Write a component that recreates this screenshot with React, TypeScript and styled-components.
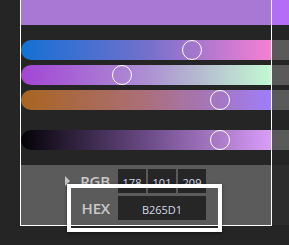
import React from "react";
import styled, { createGlobalStyle } from "styled-components";

const Global = createGlobalStyle`
  html, body { margin: 0; padding: 0; background: #252525; overflow: hidden; }
  #root { width: 289px; height: 245px; }
`;

const Page = styled.div`
  position: relative;
  display: flex;
  align-items: flex-start;
  width: 289px;
  height: 245px;
  padding-left: 20px;
  box-sizing: border-box;
  background: #252525;
  font-family: "Open Sans", "Liberation Sans", sans-serif;
`;

const Frame = styled.div`
  width: 252px;
  box-sizing: border-box;
  border-left: 1px solid #ffffff;
  border-right: 1px solid #ffffff;
  border-bottom: 1px solid #ffffff;
  display: flex;
  flex-direction: column;
`;

const Header = styled.div`
  height: 25px;
  background: #a878d4;
`;

const Track = styled.div<{ $mt: number; $grad: string }>`
  position: relative;
  height: 20px;
  margin-top: ${(p) => p.$mt}px;
  border-radius: 10px 0 0 10px;
  background: ${(p) => p.$grad};
`;

const Thumb = styled.div`
  position: absolute;
  top: 0;
  width: 20px;
  height: 20px;
  box-sizing: border-box;
  border: 1.5px solid #ffffff;
  border-radius: 50%;
`;

const Panel = styled.div`
  margin-top: 15px;
  height: 60px;
  box-sizing: border-box;
  background: #5b5b5b;
  padding: 4px 0 5px;
  display: grid;
  grid-template-columns: 89px 88px;
  grid-auto-rows: 24px;
  column-gap: 8px;
  row-gap: 3px;
`;

const Label = styled.div`
  display: flex;
  align-items: center;
  justify-content: flex-end;
  gap: 10px;
  color: #c9c9c9;
  font-weight: 600;
  font-size: 15px;
  letter-spacing: -0.2px;
`;

const Caret = styled.span`
  width: 0;
  height: 0;
  border-top: 5px solid transparent;
  border-bottom: 5px solid transparent;
  border-left: 5px solid #c4c4c4;
`;

const Fields = styled.div`
  display: flex;
  gap: 2px;
`;

const Field = styled.div<{ $w: number }>`
  width: ${(p) => p.$w}px;
  height: 100%;
  background: #262626;
  color: #d2daea;
  font-size: 11px;
  display: flex;
  align-items: center;
  justify-content: center;
  padding-top: 2px;
  box-sizing: border-box;
`;

const Strip = styled.div`
  width: 17px;
  display: flex;
  flex-direction: column;
`;

const Seg = styled.div<{ $h: number; $bg: string }>`
  height: ${(p) => p.$h}px;
  background: ${(p) => p.$bg};
`;

const Highlight = styled.div`
  position: absolute;
  left: 67px;
  top: 184px;
  width: 155px;
  height: 48px;
  box-sizing: border-box;
  border: 4px solid #ffffff;
  box-shadow: 0 1px 3px rgba(0, 0, 0, 0.5);
  pointer-events: none;
`;

const sliders = [
  { mt: 15, grad: "linear-gradient(90deg, #1470d4 0%, #7270cc 50%, #f580d3 100%)", pos: 171 },
  { mt: 5, grad: "linear-gradient(90deg, #a345d5 0%, #ad8fd4 50%, #b6bcd0 72%, #c2f9d2 100%)", pos: 101 },
  { mt: 5, grad: "linear-gradient(90deg, #a86420 0%, #ab6f7a 50%, #a07df8 100%)", pos: 199 },
  { mt: 20, grad: "linear-gradient(90deg, #030206 0%, #6a4a86 50%, #d99df9 100%)", pos: 199 },
];

const strip: [number, string][] = [
  [25, "#b46ef5"],
  [15, "#252525"],
  [20, "#5a5a5a"],
  [5, "#252525"],
  [20, "#5a5a5a"],
  [5, "#252525"],
  [20, "#5a5a5a"],
  [20, "#252525"],
  [20, "#5a5a5a"],
  [15, "#252525"],
  [60, "#2c2c2c"],
];

export default function App() {
  return (
    <>
      <Global />
      <Page>
        <Frame>
          <Header />
          {sliders.map((s, i) => (
            <Track key={i} $mt={s.mt} $grad={s.grad}>
              <Thumb style={{ left: s.pos - 10 }} />
            </Track>
          ))}
          <Panel>
            <Label>
              <Caret />
              RGB
            </Label>
            <Fields>
              <Field $w={28}>178</Field>
              <Field $w={28}>101</Field>
              <Field $w={28}>209</Field>
            </Fields>
            <Label>HEX</Label>
            <Fields>
              <Field $w={88}>B265D1</Field>
            </Fields>
          </Panel>
        </Frame>
        <Strip>
          {strip.map(([h, bg], i) => (
            <Seg key={i} $h={h} $bg={bg} />
          ))}
        </Strip>
        <Highlight />
      </Page>
    </>
  );
}
